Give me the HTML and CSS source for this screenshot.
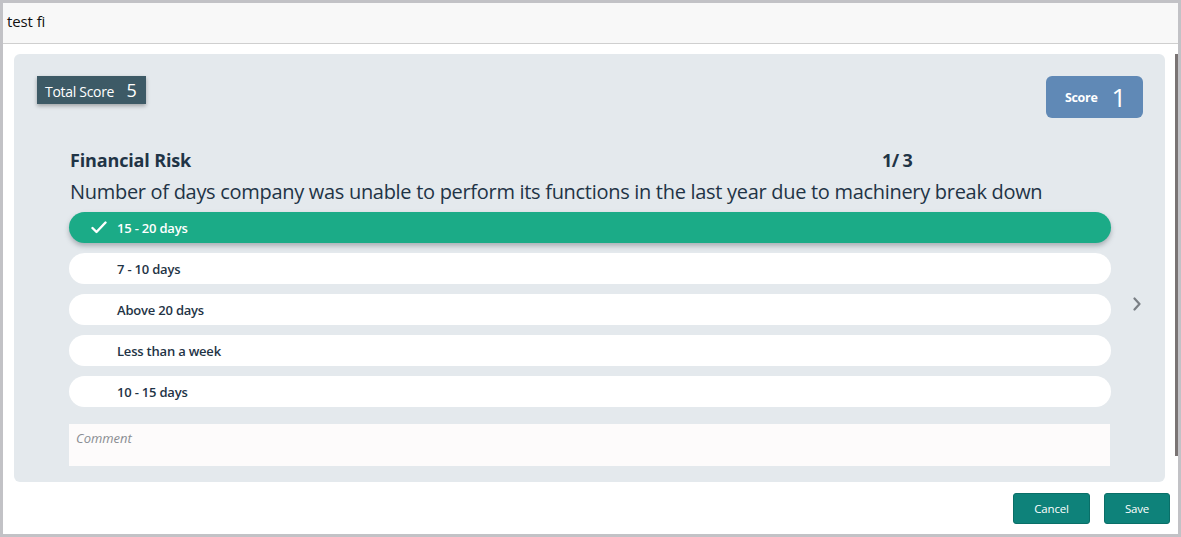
FILE: index.html
```html
<!DOCTYPE html>
<html>
<head>
<meta charset="utf-8">
<link rel="stylesheet" href="styles.css">
</head>
<body>
<div class="frame">
  <div class="header">test fi</div>
  <div class="body">
    <div class="card">
      <div class="top">
        <div class="total">Total Score <span class="total-num">5</span></div>
        <div class="score">Score <span class="score-num">1</span></div>
      </div>
      <div class="content">
        <div class="main">
          <div class="titlerow">
            <div class="title">Financial Risk</div>
            <div class="count">1/ 3</div>
          </div>
          <div class="question">Number of days company was unable to perform its functions in the last year due to machinery break down</div>
          <div class="options">
            <div class="opt selected">
              <svg class="check" width="16" height="13" viewBox="0 0 16 13"><path d="M1.5 7 L5.5 11 L14.5 1.5" fill="none" stroke="#fff" stroke-width="2.4" stroke-linecap="round" stroke-linejoin="round"/></svg>
              <span>15 - 20 days</span>
            </div>
            <div class="opt"><span>7 - 10 days</span></div>
            <div class="opt"><span>Above 20 days</span></div>
            <div class="opt"><span>Less than a week</span></div>
            <div class="opt"><span>10 - 15 days</span></div>
          </div>
          <div class="comment">Comment</div>
        </div>
        <div class="nav">
          <svg width="10" height="14" viewBox="0 0 10 14"><path d="M2.5 1.5 L7.5 7 L2.5 12.5" fill="none" stroke="#7a7f85" stroke-width="2.2" stroke-linecap="round" stroke-linejoin="round"/></svg>
        </div>
      </div>
    </div>
    <div class="actions">
      <button class="btn">Cancel</button>
      <button class="btn">Save</button>
    </div>
    <div class="scroll"></div>
  </div>
</div>
</body>
</html>
```

FILE: styles.css
```css
html, body {
  margin: 0;
  padding: 0;
  background: #c2c2c6;
}
body {
  font-family: "Open Sans", "Noto Sans", sans-serif;
  color: #1f3446;
}
.frame {
  width: 1175px;
  height: 531px;
  margin: 3px;
  background: #fff;
  display: flex;
  flex-direction: column;
  overflow: hidden;
}
.header {
  height: 41px;
  box-sizing: border-box;
  background: #f8f8f8;
  border-bottom: 1px solid #cfcfcf;
  padding: 8px 0 0 4px;
  font-size: 15px;
  color: #111;
  letter-spacing: -0.1px;
}
.body {
  position: relative;
  flex: 1;
  padding: 10px 0 0 11px;
}
.scroll {
  position: absolute;
  right: 0;
  top: 10px;
  width: 3px;
  height: 402px;
  background: #7a7474;
}
.card {
  width: 1151px;
  height: 428px;
  box-sizing: border-box;
  background: #e4e9ed;
  border-radius: 6px;
  padding: 22px 22px 0 23px;
}
.top {
  display: flex;
  justify-content: space-between;
  align-items: flex-start;
}
.total {
  background: #3d5a66;
  color: #fff;
  height: 28px;
  box-sizing: border-box;
  padding: 2px 9px 0 8px;
  font-size: 14px;
  letter-spacing: -0.3px;
  box-shadow: 0 2px 4px rgba(0,0,0,0.3);
}
.total-num {
  font-size: 18px;
  margin-left: 9px;
}
.score {
  background: #6089b6;
  color: #fff;
  width: 97px;
  height: 42px;
  box-sizing: border-box;
  border-radius: 6px;
  display: flex;
  align-items: center;
  justify-content: center;
  gap: 14px;
  padding-left: 2px;
  font-size: 12.5px;
  font-weight: 700;
  letter-spacing: -0.3px;
}
.score-num {
  font-size: 26px;
  font-weight: 400;
}
.content {
  display: flex;
  align-items: flex-start;
  margin-top: 28px;
}
.main {
  width: 1042px;
  margin-left: 32px;
}
.titlerow {
  display: flex;
  height: 28px;
  align-items: center;
  font-size: 18px;
  font-weight: 700;
  letter-spacing: -0.15px;
}
.title {
  width: 812px;
  padding-left: 1px;
}
.count {
  letter-spacing: -0.6px;
}
.question {
  font-size: 20px;
  letter-spacing: -0.3px;
  height: 30px;
  line-height: 30px;
  padding-left: 1px;
  margin-top: 3px;
}
.options {
  display: flex;
  flex-direction: column;
  gap: 10px;
  margin-top: 5px;
}
.opt {
  height: 31px;
  background: #fff;
  border-radius: 16px;
  display: flex;
  align-items: center;
  padding-left: 48px;
  font-size: 13px;
  font-weight: 600;
  letter-spacing: -0.2px;
  position: relative;
}
.opt.selected {
  background: #1bab87;
  color: #fff;
  box-shadow: 0 3px 5px rgba(60,70,80,0.35);
}
.check {
  position: absolute;
  left: 22px;
  top: 9px;
}
.comment {
  margin-top: 17px;
  width: 1041px;
  height: 42px;
  box-sizing: border-box;
  background: #fdfbfb;
  padding: 5px 0 0 7px;
  font-size: 13px;
  font-style: italic;
  color: #8a8d92;
}
.nav {
  margin-left: 21px;
  margin-top: 148px;
}
.actions {
  display: flex;
  justify-content: flex-end;
  gap: 14px;
  padding-right: 8px;
  margin-top: 11px;
}
.btn {
  height: 31px;
  background: #0e827a;
  border: 1px solid #0a6f68;
  border-radius: 3px;
  color: #fff;
  font-family: "Open Sans", "Noto Sans", sans-serif;
  font-size: 11.5px;
  letter-spacing: -0.2px;
  padding: 0;
}
.btn:first-child { width: 77px; }
.btn:last-child { width: 66px; }
```
